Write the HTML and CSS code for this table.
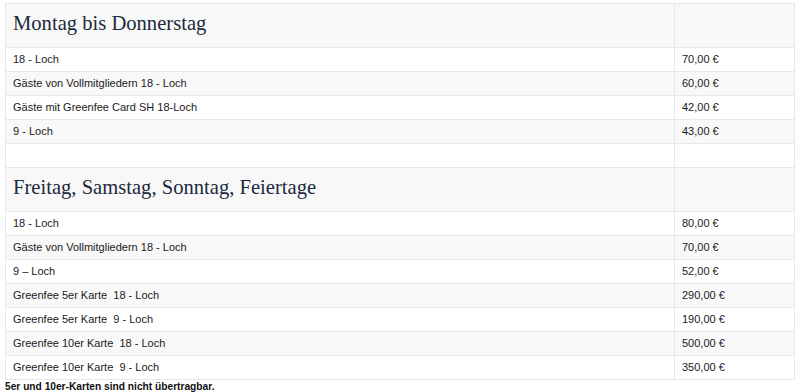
FILE: index.html
```html
<!DOCTYPE html>
<html lang="de">
<head>
<meta charset="utf-8">
<title>Greenfee</title>
<link rel="stylesheet" href="styles.css">
</head>
<body>
<table class="prices">
  <colgroup><col class="c-name"><col class="c-price"></colgroup>
  <tbody>
    <tr class="odd"><td class="head">Montag bis Donnerstag</td><td class="head"></td></tr>
    <tr><td>18 - Loch</td><td>70,00 €</td></tr>
    <tr class="odd"><td>Gäste von Vollmitgliedern 18 - Loch</td><td>60,00 €</td></tr>
    <tr><td>Gäste mit Greenfee Card SH 18-Loch</td><td>42,00 €</td></tr>
    <tr class="odd"><td>9 - Loch</td><td>43,00 €</td></tr>
    <tr><td></td><td></td></tr>
    <tr class="odd"><td class="head">Freitag, Samstag, Sonntag, Feiertage</td><td class="head"></td></tr>
    <tr><td>18 - Loch</td><td>80,00 €</td></tr>
    <tr class="odd"><td>Gäste von Vollmitgliedern 18 - Loch</td><td>70,00 €</td></tr>
    <tr><td>9 – Loch</td><td>52,00 €</td></tr>
    <tr class="odd"><td>Greenfee 5er Karte&nbsp; 18 - Loch</td><td>290,00 €</td></tr>
    <tr><td>Greenfee 5er Karte&nbsp; 9 - Loch</td><td>190,00 €</td></tr>
    <tr class="odd"><td>Greenfee 10er Karte&nbsp; 18 - Loch</td><td>500,00 €</td></tr>
    <tr><td>Greenfee 10er Karte&nbsp; 9 - Loch</td><td>350,00 €</td></tr>
  </tbody>
</table>
<p class="note">5er und 10er-Karten sind nicht übertragbar.</p>
</body>
</html>
```
FILE: styles.css
```css
html, body {
  margin: 0;
  background: #ffffff;
}
body {
  padding: 3px 5px 0;
  font-family: "Liberation Sans", Arial, Helvetica, sans-serif;
  font-size: 11px;
  color: #1a1a1a;
}
.prices {
  border-collapse: collapse;
  table-layout: fixed;
  width: 789px;
  border: 1px solid #e8e8e8;
}
.c-name { width: 669px; }
.c-price { width: 120px; }
.prices td {
  border: 1px solid #e8e8e8;
  padding: 0 6px 0 7px;
  line-height: 23px;
  height: 23px;
  vertical-align: middle;
  white-space: nowrap;
}
.prices tr.odd td {
  background: #f8f8f8;
}
.prices td.head {
  font-family: "Liberation Serif", "Times New Roman", serif;
  font-size: 20.6px;
  color: #1b2a3c;
  line-height: 28px;
  height: 28px;
  padding-top: 5px;
  padding-bottom: 10px;
  vertical-align: top;
}
.note {
  margin: 0;
  font-size: 10.2px;
  font-weight: bold;
  line-height: 14px;
  color: #111111;
}
```
